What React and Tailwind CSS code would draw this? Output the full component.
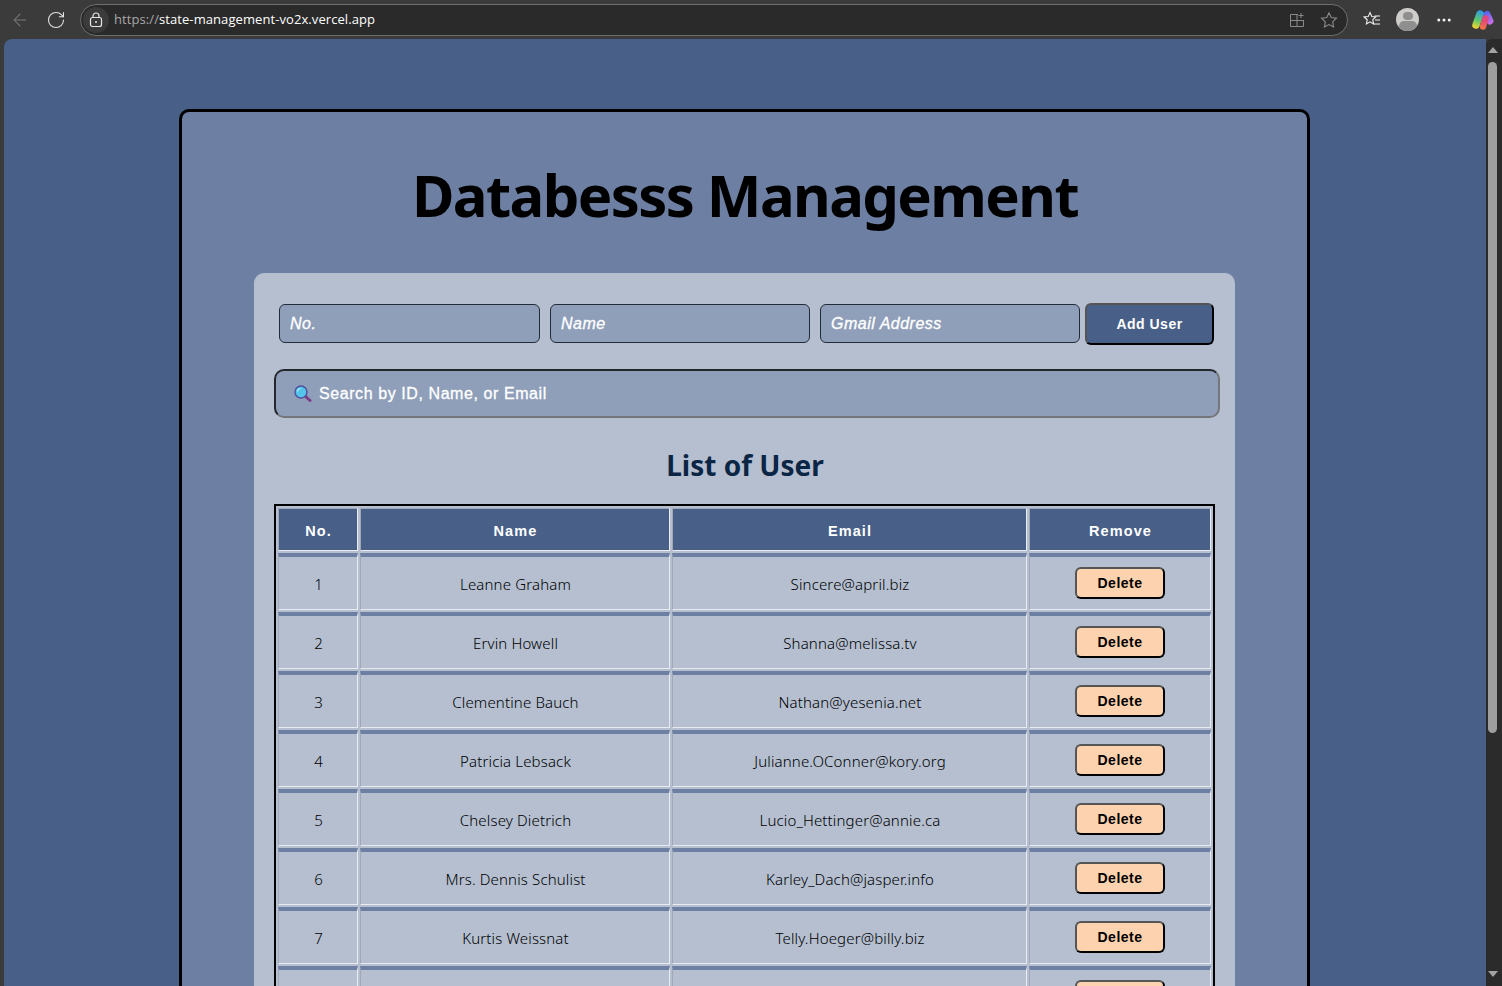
import React from 'react';
import { ArrowLeft, RotateCw, MoreHorizontal } from 'lucide-react';

const users = [
  { id: 1, name: 'Leanne Graham', email: 'Sincere@april.biz' },
  { id: 2, name: 'Ervin Howell', email: 'Shanna@melissa.tv' },
  { id: 3, name: 'Clementine Bauch', email: 'Nathan@yesenia.net' },
  { id: 4, name: 'Patricia Lebsack', email: 'Julianne.OConner@kory.org' },
  { id: 5, name: 'Chelsey Dietrich', email: 'Lucio_Hettinger@annie.ca' },
  { id: 6, name: 'Mrs. Dennis Schulist', email: 'Karley_Dach@jasper.info' },
  { id: 7, name: 'Kurtis Weissnat', email: 'Telly.Hoeger@billy.biz' },
  { id: 8, name: 'Nicholas Runolfsdottir V', email: 'Sherwood@rosamond.me' },
];

const BrowserBar = () => (
  <div className="h-[39px] shrink-0 flex items-center bg-[#3b3b3b] text-white">
    <ArrowLeft className="ml-[10px] w-[20px] h-[20px] text-[#7b7b7b]" strokeWidth={1.25} />
    <RotateCw className="ml-[16px] w-[20px] h-[20px] text-[#e6e6e6]" strokeWidth={1.25} />
    <div className="ml-[14px] w-[1268px] h-[32px] rounded-full border border-[#6e6e6e] bg-[#2a2a2a] flex items-center">
      <div className="ml-[2px] w-[26px] h-[26px] rounded-full bg-[#3b3b3b] flex items-center justify-center">
        <svg width="14" height="16" viewBox="0 0 14 16" fill="none" stroke="#e6e6e6" strokeWidth="1.2">
          <rect x="1.5" y="5.5" width="11" height="9" rx="2" />
          <path d="M4 5.5V4a3 3 0 0 1 6 0v1.5" />
          <circle cx="7" cy="10" r="1" fill="#e6e6e6" stroke="none" />
        </svg>
      </div>
      <span className="ml-[5px] pt-[1px] text-[13px] tracking-[0.08px] font-['Open_Sans',sans-serif] text-white">
        <span className="text-[#a8a8a8]">https://</span>state-management-vo2x.vercel.app
      </span>
      <svg className="ml-auto -translate-x-px" width="16" height="16" viewBox="0 0 16 16" fill="none" stroke="#8a8a8a" strokeWidth="1">
        <path d="M9 2.5H1.5v12h13V8M1.5 8.5h13M8 2.5v12M12 1v5M9.5 3.500h5" />
      </svg>
      <svg className="ml-[14px] mr-[9px]" width="18" height="18" viewBox="0 0 24 24" fill="none" stroke="#8a8a8a" strokeWidth="1.5">
        <path d="M12 2.500l3 6.300 6.900.9-5 4.800 1.200 6.900-6.100-3.300-6.100 3.300 1.200-6.900-5-4.800 6.900-.9z" />
      </svg>
    </div>
    <svg className="ml-[15px]" width="18" height="18" viewBox="0 0 18 18" fill="none" stroke="#f2f2f2" strokeWidth="1.100">
      <path d="M7 1.500l1.800 4 4 .4-3 2.800.8 4.200L7 10.800 3.400 13l.8-4.200-3-2.800 4-.4z" />
      <path d="M11.500 5h5.500M12 9h5M10.500 13h6.500" />
    </svg>
    <div className="ml-[15px] w-[23px] h-[23px] rounded-full bg-[#cfcdca] overflow-hidden flex flex-col items-center">
      <div className="mt-[4px] w-[10px] h-[10px] rounded-full bg-[#8f8f8f]" />
      <div className="mt-[1px] w-[18px] h-[12px] rounded-full bg-[#8f8f8f]" />
    </div>
    <MoreHorizontal className="ml-[16px] w-[18px] h-[18px] text-[#f2f2f2]" strokeWidth={2} />
    <svg className="ml-[17px]" width="24" height="24" viewBox="0 0 24 24" fill="none" strokeLinecap="round">
      <defs>
        <linearGradient id="copilotA" gradientUnits="userSpaceOnUse" x1="11" y1="3" x2="5" y2="20">
          <stop offset="0" stopColor="#2f9be8" />
          <stop offset="0.55" stopColor="#5fc86a" />
          <stop offset="1" stopColor="#f5d633" />
        </linearGradient>
        <linearGradient id="copilotB" gradientUnits="userSpaceOnUse" x1="14" y1="4" x2="21" y2="16">
          <stop offset="0" stopColor="#4d63ea" />
          <stop offset="1" stopColor="#cf6fe6" />
        </linearGradient>
        <linearGradient id="copilotC" gradientUnits="userSpaceOnUse" x1="15" y1="12" x2="12" y2="22">
          <stop offset="0" stopColor="#e0487f" />
          <stop offset="1" stopColor="#f6783a" />
        </linearGradient>
      </defs>
      <path d="M17 6.500L20 13" stroke="url(#copilotB)" strokeWidth="7" />
      <path d="M10 6L6 17" stroke="url(#copilotA)" strokeWidth="7.500" />
      <path d="M15.500 10.500L13 18.500" stroke="url(#copilotC)" strokeWidth="6.500" />
    </svg>
  </div>
);

const Scrollbar = () => (
  <div className="w-[16px] shrink-0 bg-[#2b2b2b] rounded-tl-md flex flex-col items-center pr-[3px]">
    <div className="mt-[8px] w-0 h-0 border-x-[5px] border-x-transparent border-b-[6px] border-b-[#a3a3a3]" />
    <div className="mt-[9px] w-[9px] h-[671px] rounded-full bg-[#9e9e9e]" />
    <div className="mt-auto mb-[9px] w-0 h-0 border-x-[5px] border-x-transparent border-t-[6px] border-t-[#a3a3a3]" />
  </div>
);

const SearchIcon = () => (
  <svg width="18" height="18" viewBox="0 0 18 18">
    <path d="M11 11l5 4.500" stroke="#7a3f86" strokeWidth="3" strokeLinecap="round" />
    <circle cx="7" cy="7" r="6" fill="#55c4ea" stroke="#4f4f9c" strokeWidth="1.400" />
    <path d="M3.500 6.500a3.500 3.500 0 0 1 3-3" stroke="#b9ecfa" strokeWidth="1.200" fill="none" />
  </svg>
);

const fieldClass = "mt-[1px] h-[39px] rounded-[6px] border border-[#222b3a] bg-[#909fb9] pl-[10px] pr-[11px] text-[16px] italic text-white placeholder:text-white tracking-[0.5px] [-webkit-text-stroke:0.3px_white] font-['Liberation_Sans',sans-serif] outline-none";

export default function App() {
  return (
    <div className="h-[986px] overflow-hidden flex flex-col bg-[#3b3b3b]">
      <BrowserBar />
      <div className="flex-1 min-h-0 flex pl-[4px]">
        <main className="flex-1 min-w-0 overflow-hidden rounded-tl-lg bg-[#486087] pt-[70px]">
          <div className="ml-[175px] w-[1131px] rounded-[10px] border-[3px] border-black bg-[#6d7fa3] pt-[43px] pb-10">
            <h1 className="pl-[1px] text-center text-[58px] leading-[80px] font-bold tracking-[-1.6px] text-black font-['Noto_Sans',sans-serif]">
              Databesss Management
            </h1>
            <section className="mt-[38px] mx-auto w-[981px] rounded-[10px] bg-[#b5bfd0] px-[20px] pt-[30px] pb-10">
              <div className="flex items-start pl-[5px]">
                <input className={`${fieldClass} w-[261px]`} placeholder="No." />
                <input className={`${fieldClass} w-[260px] ml-[10px]`} placeholder="Name" />
                <input className={`${fieldClass} w-[260px] ml-[10px]`} placeholder="Gmail Address" />
                <button className="ml-[5px] w-[129px] h-[42px] rounded-[6px] border-2 border-t-[#555] border-l-[#555] border-r-black border-b-black bg-[#486087] text-[14px] font-bold tracking-[0.5px] text-white font-['Liberation_Sans',sans-serif]">
                  Add User
                </button>
              </div>
              <div className="mt-[24px] w-[946px] h-[49px] rounded-[10px] border-2 border-t-[#23262d] border-l-[#23262d] border-r-[#74767a] border-b-[#74767a] bg-[#909fb9] flex items-center pl-[18px]">
                <SearchIcon />
                <input
                  className="ml-[7px] flex-1 bg-transparent text-[16px] tracking-[0.58px] text-white placeholder:text-white [-webkit-text-stroke:0.3px_white] font-['Liberation_Sans',sans-serif] outline-none"
                  placeholder="Search by ID, Name, or Email"
                />
              </div>
              <h2 className="mt-[27px] pl-[1px] text-center text-[28px] leading-[40px] font-bold text-[#0b2545] font-['Noto_Sans',sans-serif]">
                List of User
              </h2>
              <table className="mt-[19px] w-[941px] table-fixed border-separate border-spacing-[2px] border-2 border-black">
                <colgroup>
                  <col className="w-[80px]" />
                  <col className="w-[310px]" />
                  <col className="w-[355px]" />
                  <col />
                </colgroup>
                <thead>
                  <tr>
                    {['No.', 'Name', 'Email', 'Remove'].map((label) => (
                      <th
                        key={label}
                        className="h-[43px] pt-[4px] pl-[1px] border border-t-[#a0a8b8] border-l-[#a0a8b8] border-r-[#e8ebf0] border-b-[#e8ebf0] bg-[#486087] text-center text-[14.5px] font-bold tracking-[1.1px] text-white font-['Liberation_Sans',sans-serif]"
                      >
                        {label}
                      </th>
                    ))}
                  </tr>
                </thead>
                <tbody>
                  {users.map((user) => (
                    <tr key={user.id}>
                      {[user.id, user.name, user.email].map((value) => (
                        <td
                          key={value}
                          className="h-[57px] pt-[2px] pl-[1px] border border-t-4 border-t-[#6d7fa3] border-l-[#a0a8b8] border-r-[#e8ebf0] border-b-[#e8ebf0] text-center text-[15px] tracking-[0.15px] font-light text-black font-['Noto_Sans',sans-serif]"
                        >
                          {value}
                        </td>
                      ))}
                      <td className="h-[57px] border border-t-4 border-t-[#6d7fa3] border-l-[#a0a8b8] border-r-[#e8ebf0] border-b-[#e8ebf0] text-center">
                        <button className="w-[90px] h-[32px] rounded-[6px] border-2 border-t-[#555] border-l-[#555] border-r-black border-b-black bg-[#fdd2ae] text-[14px] font-bold tracking-[0.5px] text-black font-['Liberation_Sans',sans-serif]">
                          Delete
                        </button>
                      </td>
                    </tr>
                  ))}
                </tbody>
              </table>
            </section>
          </div>
        </main>
        <Scrollbar />
      </div>
    </div>
  );
}
